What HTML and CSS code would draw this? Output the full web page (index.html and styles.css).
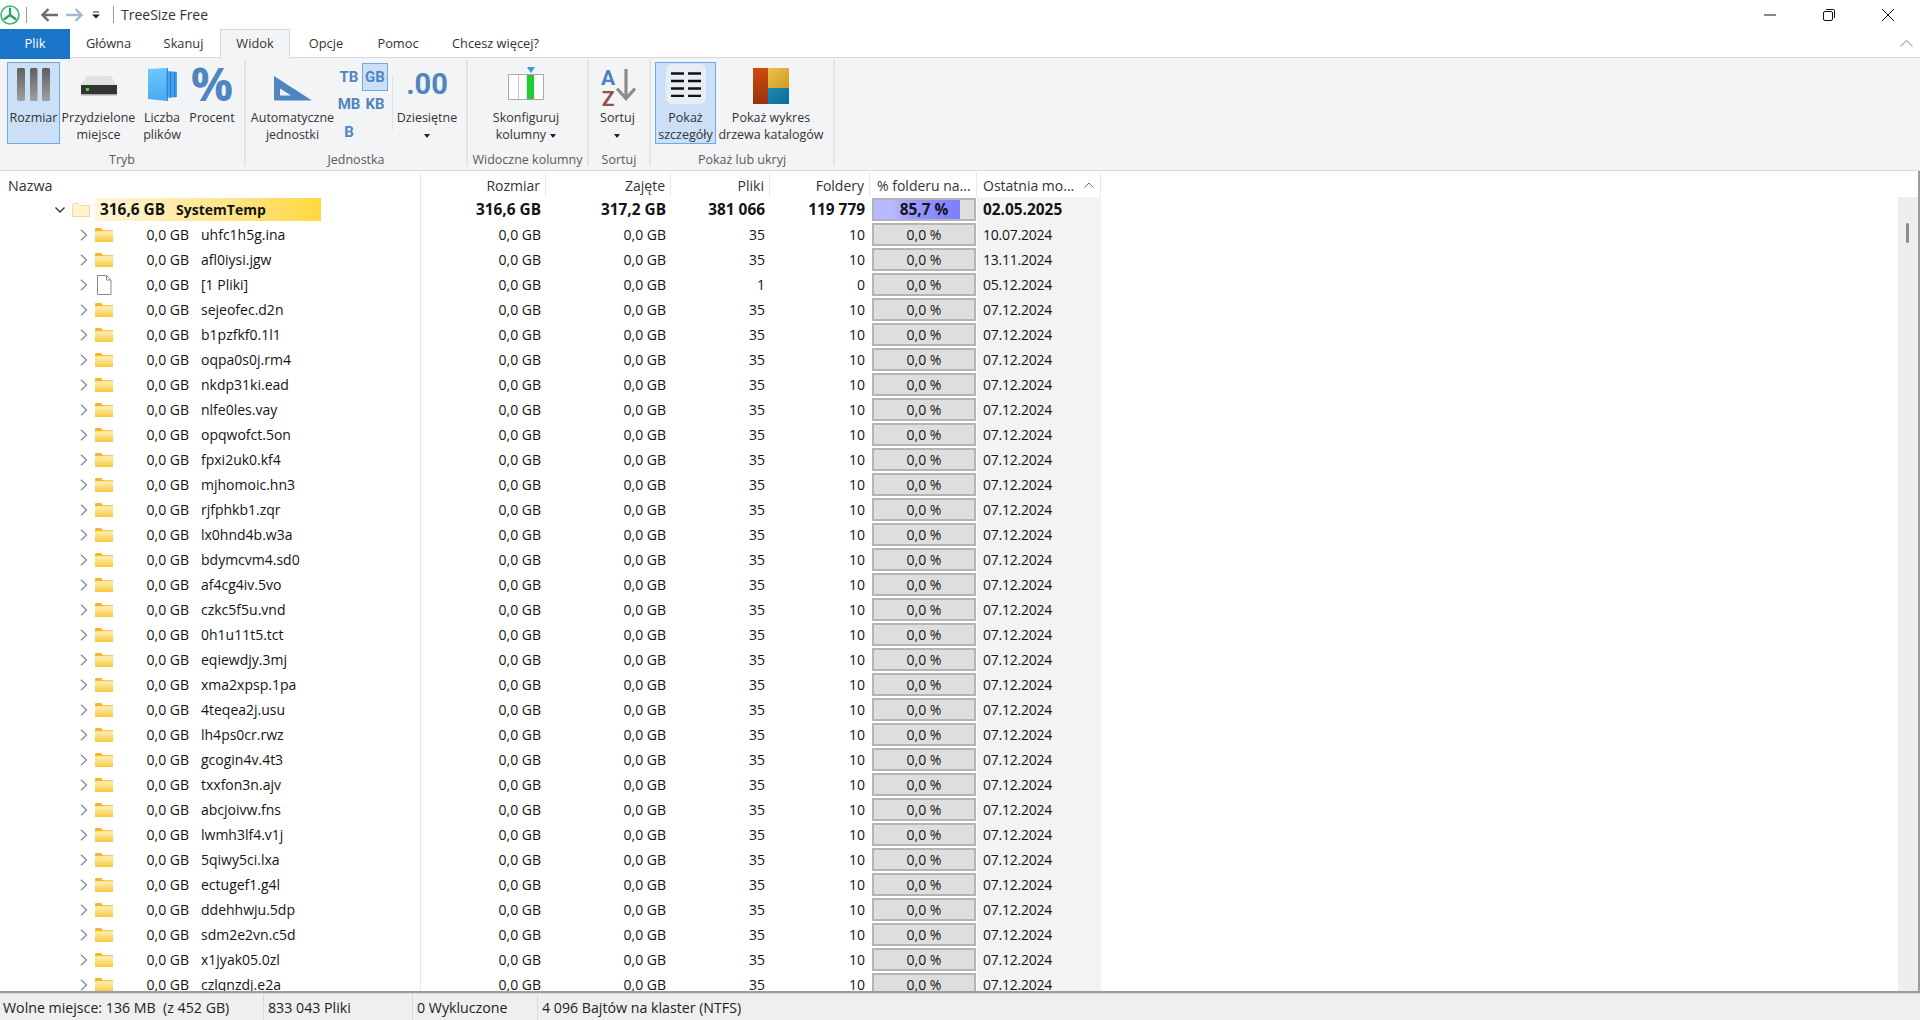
FILE: index.html
```html
<!DOCTYPE html>
<html lang="pl">
<head>
<meta charset="utf-8">
<title>TreeSize Free</title>
<link rel="stylesheet" href="styles.css">
</head>
<body>
<svg class="defs" width="0" height="0" aria-hidden="true">
  <defs>
    <linearGradient id="fgrad" x1="0" y1="0" x2="0" y2="1"><stop offset="0" stop-color="#fff0b8"/><stop offset="1" stop-color="#f8c840"/></linearGradient>
    <linearGradient id="barg" x1="0" y1="0" x2="0" y2="1"><stop offset="0" stop-color="#5f5f5f"/><stop offset="1" stop-color="#a0a0a0"/></linearGradient>
    <linearGradient id="pageg" x1="0" y1="0" x2="0" y2="1"><stop offset="0" stop-color="#6fc8fb"/><stop offset="1" stop-color="#4aaaf2"/></linearGradient>
    <linearGradient id="redg" x1="0" y1="0" x2="0" y2="1"><stop offset="0" stop-color="#cf4a0e"/><stop offset="1" stop-color="#97330f"/></linearGradient>
    <linearGradient id="yelg" x1="0" y1="0" x2="1" y2="1"><stop offset="0" stop-color="#ecc050"/><stop offset="1" stop-color="#d09c20"/></linearGradient>
    <linearGradient id="blug" x1="0" y1="0" x2="1" y2="1"><stop offset="0" stop-color="#2088b4"/><stop offset="1" stop-color="#0a6a96"/></linearGradient>
    <symbol id="folder" viewBox="0 0 18 14"><path d="M0 1.500C0 .6.500 0 1.300 0H6l2 2.200h10V4H0z" fill="#f5b52a"/><path d="M0 3.200h18V14H0z" fill="url(#fgrad)"/></symbol>
    <symbol id="chev" viewBox="0 0 12 12"><path d="M4 .7 9.500 6 4 11.300" fill="none" stroke="#8a8a8a" stroke-width="1.300"/></symbol>
  </defs>
</svg>
<div class="app">
  <header class="titlebar">
    <svg class="logo" viewBox="0 0 20 20"><circle cx="10" cy="10" r="9" fill="#f2fbf6" stroke="#3cb878" stroke-width="1.600"/><path d="M10 3.500V10M10 10l-5.500 4M10 10l5.500 4" stroke="#2f9e68" stroke-width="2.200" fill="none" stroke-linecap="round"/></svg>
    <span class="tsep"></span>
    <svg class="nav" viewBox="0 0 17 14"><path d="M7.500 1 1.500 7l6 6M1.500 7H17" fill="none" stroke="#6c6c6c" stroke-width="2.400"/></svg>
    <svg class="nav nav-fwd" viewBox="0 0 17 14"><path d="M9.500 1l6 6-6 6M15.500 7H0" fill="none" stroke="#a4b8d2" stroke-width="2.400"/></svg>
    <svg class="qa" viewBox="0 0 8 8"><path d="M1 1h6" stroke="#222" stroke-width="1"/><path d="M0 3.500h8L4 7.500z" fill="#222"/></svg>
    <span class="tsep tsep2"></span>
    <span class="apptitle">TreeSize Free</span>
    <div class="winctl">
      <svg viewBox="0 0 12 12"><path d="M0 6h12" stroke="#111" stroke-width="1"/></svg>
      <svg viewBox="0 0 12 12"><rect x=".5" y="2.500" width="9" height="9" rx="1.500" fill="none" stroke="#111"/><path d="M3 .5h7.500a1 1 0 0 1 1 1V9" fill="none" stroke="#111"/></svg>
      <svg viewBox="0 0 12 12"><path d="M0 0l12 12M12 0 0 12" stroke="#111" stroke-width="1"/></svg>
    </div>
  </header>

  <nav class="tabs">
    <span class="tab tab-file">Plik</span>
    <span class="tab">Główna</span>
    <span class="tab">Skanuj</span>
    <span class="tab tab-active">Widok</span>
    <span class="tab">Opcje</span>
    <span class="tab">Pomoc</span>
    <span class="tab">Chcesz więcej?</span>
    <svg class="collapse" viewBox="0 0 13 8"><path d="M.5 7.500l6-6 6 6" fill="none" stroke="#b0b0b0" stroke-width="1.200"/></svg>
  </nav>

  <section class="ribbon">
    <div class="group g-tryb">
      <div class="gbody">
        <div class="rbtn w-rozmiar on">
          <svg class="ico" width="34" height="33" viewBox="0 0 34 33"><rect x="0" y="0" width="8" height="33" rx="1.500" fill="url(#barg)"/><rect x="13" y="0" width="7.500" height="33" rx="1.500" fill="url(#barg)"/><rect x="25" y="0" width="8" height="33" rx="1.500" fill="url(#barg)"/></svg>
          <span class="lbl">Rozmiar</span>
        </div>
        <div class="rbtn w-przy">
          <svg class="ico" width="36" height="20" viewBox="0 0 36 20"><path d="M6 0h24l6 9H0z" fill="#e2e2e2"/><path d="M0 9h36v10H0z" fill="#333"/><path d="M0 18h36v1.500H0z" fill="#aaa"/><rect x="5" y="12" width="3" height="3" fill="#3fdc4a"/></svg>
          <span class="lbl">Przydzielone<br>miejsce</span>
        </div>
        <div class="rbtn w-licz">
          <svg class="ico" width="29" height="33" viewBox="0 0 29 33"><path d="M18 3l11 1v25l-11 1z" fill="#4aa4ee"/><path d="M22 3.500h1.300v26H22zM26 3.800h1.300v25.400H26z" fill="#1f7fd0"/><path d="M0 1 18.500 0v33L0 31z" fill="url(#pageg)"/><path d="M18.500 0H20v33h-1.500z" fill="#2b8ee0"/></svg>
          <span class="lbl">Liczba<br>plików</span>
        </div>
        <div class="rbtn w-licz">
          <span class="ico pct">%</span>
          <span class="lbl">Procent</span>
        </div>
      </div>
      <div class="glabel">Tryb</div>
    </div>

    <div class="group g-jedn">
      <div class="gbody">
        <div class="rbtn w-auto">
          <svg class="ico" width="38" height="25" viewBox="0 0 38 25"><path fill-rule="evenodd" d="M0 0 38 24.500H0zM6 12.500V19.500H17z" fill="#4f86c0"/></svg>
          <span class="lbl">Automatyczne<br>jednostki</span>
        </div>
        <div class="units">
          <span class="unit">TB</span><span class="unit unit-on">GB</span>
          <span class="unit">MB</span><span class="unit">KB</span>
          <span class="unit">B</span>
        </div>
        <span class="vsep"></span>
        <div class="rbtn w-dzies">
          <span class="ico dec">.00</span>
          <span class="lbl">Dziesiętne<br><i class="caret"></i></span>
        </div>
      </div>
      <div class="glabel">Jednostka</div>
    </div>

    <div class="group g-kol">
      <div class="gbody">
        <div class="rbtn w-full">
          <svg class="ico" width="36" height="34" viewBox="0 0 36 34"><path d="M19 0h8l-4 6z" fill="#3b97e0"/><path d="M.5 7.500h35v25H.5z" fill="#fff" stroke="#a8a8a8"/><path d="M10.500 8v24M19 8v24" stroke="#c8c8c8"/><rect x="19" y="8" width="7" height="24" fill="#22cc33"/></svg>
          <span class="lbl">Skonfiguruj<br>kolumny <i class="caret caret-inline"></i></span>
        </div>
      </div>
      <div class="glabel">Widoczne kolumny</div>
    </div>

    <div class="group g-sort">
      <div class="gbody">
        <div class="rbtn w-full">
          <div class="ico sorticon">
            <span class="az"><b class="az-a">A</b><b class="az-z">Z</b></span>
            <svg width="20" height="32" viewBox="0 0 20 32"><path d="M10 0v29M1 19.500 10 29.500l9-10" fill="none" stroke="#8c8c8c" stroke-width="3.200"/></svg>
          </div>
          <span class="lbl">Sortuj<br><i class="caret"></i></span>
        </div>
      </div>
      <div class="glabel">Sortuj</div>
    </div>

    <div class="group g-pokaz">
      <div class="gbody">
        <div class="rbtn w-szcz on">
          <span class="ico detail">
            <svg width="30" height="25" viewBox="0 0 30 25"><path d="M0 1.500h13M17 1.500h13M0 9h13M17 9h13M0 16.500h13M17 16.500h13M0 24h13M17 24h13" stroke="#111" stroke-width="2.400"/></svg>
          </span>
          <span class="lbl">Pokaż<br>szczegóły</span>
        </div>
        <div class="rbtn w-wyk">
          <svg class="ico" width="36" height="36" viewBox="0 0 36 36"><rect x="0" y="0" width="15" height="36" fill="url(#redg)"/><rect x="15" y="0" width="21" height="20" fill="url(#yelg)"/><rect x="15" y="20" width="21" height="16" fill="url(#blug)"/></svg>
          <span class="lbl">Pokaż wykres<br>drzewa katalogów</span>
        </div>
      </div>
      <div class="glabel">Pokaż lub ukryj</div>
    </div>
  </section>

  <main class="table">
    <div class="thead">
      <span class="th th-name">Nazwa</span>
      <span class="th">Rozmiar</span>
      <span class="th">Zajęte</span>
      <span class="th">Pliki</span>
      <span class="th">Foldery</span>
      <span class="th th-pct">% folderu na...</span>
      <span class="th th-date">Ostatnia mo...<svg class="sortup" viewBox="0 0 10 6"><path d="M.5 5.500 5 1l4.500 4.500" fill="none" stroke="#777"/></svg></span>
    </div>
    <div class="tbody">
      <div class="rows">
        <div class="row root">
          <div class="c-name"><svg class="chev" viewBox="0 0 12 12"><path d="M1.500 3.500 6 8l4.500-4.500" fill="none" stroke="#333" stroke-width="1.300"/></svg><svg class="fold" viewBox="0 0 18 14"><path d="M.5 1.500C.5.800 1 .5 1.500.5H6l2 2h9.500v11H.5z" fill="#fff3d0" stroke="#f0dca0"/></svg><div class="rootbar"><span class="sz">316,6 GB</span><span class="nm">SystemTemp</span></div></div>
          <span class="num">316,6 GB</span><span class="num">317,2 GB</span><span class="num">381 066</span><span class="num">119 779</span>
          <div class="c-pct"><div class="pbar"><i class="pfill" style="width:85.7%"></i><span class="ptext">85,7 %</span></div></div>
          <span class="c-date">02.05.2025</span>
        </div>
        <div class="row"><div class="c-name"><svg class="chev"><use href="#chev"/></svg><svg class="fold"><use href="#folder"/></svg><span class="sz">0,0 GB</span><span class="nm">uhfc1h5g.ina</span></div><span class="num">0,0 GB</span><span class="num">0,0 GB</span><span class="num">35</span><span class="num">10</span><div class="c-pct"><div class="pbar"><span class="ptext">0,0 %</span></div></div><span class="c-date">10.07.2024</span></div>
        <div class="row"><div class="c-name"><svg class="chev"><use href="#chev"/></svg><svg class="fold"><use href="#folder"/></svg><span class="sz">0,0 GB</span><span class="nm">afl0iysi.jgw</span></div><span class="num">0,0 GB</span><span class="num">0,0 GB</span><span class="num">35</span><span class="num">10</span><div class="c-pct"><div class="pbar"><span class="ptext">0,0 %</span></div></div><span class="c-date">13.11.2024</span></div>
        <div class="row"><div class="c-name"><svg class="chev"><use href="#chev"/></svg><svg class="fold fold-file" viewBox="0 0 18 20"><path d="M2.500.5h9l4.500 4.500v14.500H2.500zM11.500.5V5H16" fill="#fff" stroke="#8a8a8a"/></svg><span class="sz">0,0 GB</span><span class="nm">[1 Pliki]</span></div><span class="num">0,0 GB</span><span class="num">0,0 GB</span><span class="num">1</span><span class="num">0</span><div class="c-pct"><div class="pbar"><span class="ptext">0,0 %</span></div></div><span class="c-date">05.12.2024</span></div>
        <div class="row"><div class="c-name"><svg class="chev"><use href="#chev"/></svg><svg class="fold"><use href="#folder"/></svg><span class="sz">0,0 GB</span><span class="nm">sejeofec.d2n</span></div><span class="num">0,0 GB</span><span class="num">0,0 GB</span><span class="num">35</span><span class="num">10</span><div class="c-pct"><div class="pbar"><span class="ptext">0,0 %</span></div></div><span class="c-date">07.12.2024</span></div>
        <div class="row"><div class="c-name"><svg class="chev"><use href="#chev"/></svg><svg class="fold"><use href="#folder"/></svg><span class="sz">0,0 GB</span><span class="nm">b1pzfkf0.1l1</span></div><span class="num">0,0 GB</span><span class="num">0,0 GB</span><span class="num">35</span><span class="num">10</span><div class="c-pct"><div class="pbar"><span class="ptext">0,0 %</span></div></div><span class="c-date">07.12.2024</span></div>
        <div class="row"><div class="c-name"><svg class="chev"><use href="#chev"/></svg><svg class="fold"><use href="#folder"/></svg><span class="sz">0,0 GB</span><span class="nm">oqpa0s0j.rm4</span></div><span class="num">0,0 GB</span><span class="num">0,0 GB</span><span class="num">35</span><span class="num">10</span><div class="c-pct"><div class="pbar"><span class="ptext">0,0 %</span></div></div><span class="c-date">07.12.2024</span></div>
        <div class="row"><div class="c-name"><svg class="chev"><use href="#chev"/></svg><svg class="fold"><use href="#folder"/></svg><span class="sz">0,0 GB</span><span class="nm">nkdp31ki.ead</span></div><span class="num">0,0 GB</span><span class="num">0,0 GB</span><span class="num">35</span><span class="num">10</span><div class="c-pct"><div class="pbar"><span class="ptext">0,0 %</span></div></div><span class="c-date">07.12.2024</span></div>
        <div class="row"><div class="c-name"><svg class="chev"><use href="#chev"/></svg><svg class="fold"><use href="#folder"/></svg><span class="sz">0,0 GB</span><span class="nm">nlfe0les.vay</span></div><span class="num">0,0 GB</span><span class="num">0,0 GB</span><span class="num">35</span><span class="num">10</span><div class="c-pct"><div class="pbar"><span class="ptext">0,0 %</span></div></div><span class="c-date">07.12.2024</span></div>
        <div class="row"><div class="c-name"><svg class="chev"><use href="#chev"/></svg><svg class="fold"><use href="#folder"/></svg><span class="sz">0,0 GB</span><span class="nm">opqwofct.5on</span></div><span class="num">0,0 GB</span><span class="num">0,0 GB</span><span class="num">35</span><span class="num">10</span><div class="c-pct"><div class="pbar"><span class="ptext">0,0 %</span></div></div><span class="c-date">07.12.2024</span></div>
        <div class="row"><div class="c-name"><svg class="chev"><use href="#chev"/></svg><svg class="fold"><use href="#folder"/></svg><span class="sz">0,0 GB</span><span class="nm">fpxi2uk0.kf4</span></div><span class="num">0,0 GB</span><span class="num">0,0 GB</span><span class="num">35</span><span class="num">10</span><div class="c-pct"><div class="pbar"><span class="ptext">0,0 %</span></div></div><span class="c-date">07.12.2024</span></div>
        <div class="row"><div class="c-name"><svg class="chev"><use href="#chev"/></svg><svg class="fold"><use href="#folder"/></svg><span class="sz">0,0 GB</span><span class="nm">mjhomoic.hn3</span></div><span class="num">0,0 GB</span><span class="num">0,0 GB</span><span class="num">35</span><span class="num">10</span><div class="c-pct"><div class="pbar"><span class="ptext">0,0 %</span></div></div><span class="c-date">07.12.2024</span></div>
        <div class="row"><div class="c-name"><svg class="chev"><use href="#chev"/></svg><svg class="fold"><use href="#folder"/></svg><span class="sz">0,0 GB</span><span class="nm">rjfphkb1.zqr</span></div><span class="num">0,0 GB</span><span class="num">0,0 GB</span><span class="num">35</span><span class="num">10</span><div class="c-pct"><div class="pbar"><span class="ptext">0,0 %</span></div></div><span class="c-date">07.12.2024</span></div>
        <div class="row"><div class="c-name"><svg class="chev"><use href="#chev"/></svg><svg class="fold"><use href="#folder"/></svg><span class="sz">0,0 GB</span><span class="nm">lx0hnd4b.w3a</span></div><span class="num">0,0 GB</span><span class="num">0,0 GB</span><span class="num">35</span><span class="num">10</span><div class="c-pct"><div class="pbar"><span class="ptext">0,0 %</span></div></div><span class="c-date">07.12.2024</span></div>
        <div class="row"><div class="c-name"><svg class="chev"><use href="#chev"/></svg><svg class="fold"><use href="#folder"/></svg><span class="sz">0,0 GB</span><span class="nm">bdymcvm4.sd0</span></div><span class="num">0,0 GB</span><span class="num">0,0 GB</span><span class="num">35</span><span class="num">10</span><div class="c-pct"><div class="pbar"><span class="ptext">0,0 %</span></div></div><span class="c-date">07.12.2024</span></div>
        <div class="row"><div class="c-name"><svg class="chev"><use href="#chev"/></svg><svg class="fold"><use href="#folder"/></svg><span class="sz">0,0 GB</span><span class="nm">af4cg4iv.5vo</span></div><span class="num">0,0 GB</span><span class="num">0,0 GB</span><span class="num">35</span><span class="num">10</span><div class="c-pct"><div class="pbar"><span class="ptext">0,0 %</span></div></div><span class="c-date">07.12.2024</span></div>
        <div class="row"><div class="c-name"><svg class="chev"><use href="#chev"/></svg><svg class="fold"><use href="#folder"/></svg><span class="sz">0,0 GB</span><span class="nm">czkc5f5u.vnd</span></div><span class="num">0,0 GB</span><span class="num">0,0 GB</span><span class="num">35</span><span class="num">10</span><div class="c-pct"><div class="pbar"><span class="ptext">0,0 %</span></div></div><span class="c-date">07.12.2024</span></div>
        <div class="row"><div class="c-name"><svg class="chev"><use href="#chev"/></svg><svg class="fold"><use href="#folder"/></svg><span class="sz">0,0 GB</span><span class="nm">0h1u11t5.tct</span></div><span class="num">0,0 GB</span><span class="num">0,0 GB</span><span class="num">35</span><span class="num">10</span><div class="c-pct"><div class="pbar"><span class="ptext">0,0 %</span></div></div><span class="c-date">07.12.2024</span></div>
        <div class="row"><div class="c-name"><svg class="chev"><use href="#chev"/></svg><svg class="fold"><use href="#folder"/></svg><span class="sz">0,0 GB</span><span class="nm">eqiewdjy.3mj</span></div><span class="num">0,0 GB</span><span class="num">0,0 GB</span><span class="num">35</span><span class="num">10</span><div class="c-pct"><div class="pbar"><span class="ptext">0,0 %</span></div></div><span class="c-date">07.12.2024</span></div>
        <div class="row"><div class="c-name"><svg class="chev"><use href="#chev"/></svg><svg class="fold"><use href="#folder"/></svg><span class="sz">0,0 GB</span><span class="nm">xma2xpsp.1pa</span></div><span class="num">0,0 GB</span><span class="num">0,0 GB</span><span class="num">35</span><span class="num">10</span><div class="c-pct"><div class="pbar"><span class="ptext">0,0 %</span></div></div><span class="c-date">07.12.2024</span></div>
        <div class="row"><div class="c-name"><svg class="chev"><use href="#chev"/></svg><svg class="fold"><use href="#folder"/></svg><span class="sz">0,0 GB</span><span class="nm">4teqea2j.usu</span></div><span class="num">0,0 GB</span><span class="num">0,0 GB</span><span class="num">35</span><span class="num">10</span><div class="c-pct"><div class="pbar"><span class="ptext">0,0 %</span></div></div><span class="c-date">07.12.2024</span></div>
        <div class="row"><div class="c-name"><svg class="chev"><use href="#chev"/></svg><svg class="fold"><use href="#folder"/></svg><span class="sz">0,0 GB</span><span class="nm">lh4ps0cr.rwz</span></div><span class="num">0,0 GB</span><span class="num">0,0 GB</span><span class="num">35</span><span class="num">10</span><div class="c-pct"><div class="pbar"><span class="ptext">0,0 %</span></div></div><span class="c-date">07.12.2024</span></div>
        <div class="row"><div class="c-name"><svg class="chev"><use href="#chev"/></svg><svg class="fold"><use href="#folder"/></svg><span class="sz">0,0 GB</span><span class="nm">gcogin4v.4t3</span></div><span class="num">0,0 GB</span><span class="num">0,0 GB</span><span class="num">35</span><span class="num">10</span><div class="c-pct"><div class="pbar"><span class="ptext">0,0 %</span></div></div><span class="c-date">07.12.2024</span></div>
        <div class="row"><div class="c-name"><svg class="chev"><use href="#chev"/></svg><svg class="fold"><use href="#folder"/></svg><span class="sz">0,0 GB</span><span class="nm">txxfon3n.ajv</span></div><span class="num">0,0 GB</span><span class="num">0,0 GB</span><span class="num">35</span><span class="num">10</span><div class="c-pct"><div class="pbar"><span class="ptext">0,0 %</span></div></div><span class="c-date">07.12.2024</span></div>
        <div class="row"><div class="c-name"><svg class="chev"><use href="#chev"/></svg><svg class="fold"><use href="#folder"/></svg><span class="sz">0,0 GB</span><span class="nm">abcjoivw.fns</span></div><span class="num">0,0 GB</span><span class="num">0,0 GB</span><span class="num">35</span><span class="num">10</span><div class="c-pct"><div class="pbar"><span class="ptext">0,0 %</span></div></div><span class="c-date">07.12.2024</span></div>
        <div class="row"><div class="c-name"><svg class="chev"><use href="#chev"/></svg><svg class="fold"><use href="#folder"/></svg><span class="sz">0,0 GB</span><span class="nm">lwmh3lf4.v1j</span></div><span class="num">0,0 GB</span><span class="num">0,0 GB</span><span class="num">35</span><span class="num">10</span><div class="c-pct"><div class="pbar"><span class="ptext">0,0 %</span></div></div><span class="c-date">07.12.2024</span></div>
        <div class="row"><div class="c-name"><svg class="chev"><use href="#chev"/></svg><svg class="fold"><use href="#folder"/></svg><span class="sz">0,0 GB</span><span class="nm">5qiwy5ci.lxa</span></div><span class="num">0,0 GB</span><span class="num">0,0 GB</span><span class="num">35</span><span class="num">10</span><div class="c-pct"><div class="pbar"><span class="ptext">0,0 %</span></div></div><span class="c-date">07.12.2024</span></div>
        <div class="row"><div class="c-name"><svg class="chev"><use href="#chev"/></svg><svg class="fold"><use href="#folder"/></svg><span class="sz">0,0 GB</span><span class="nm">ectugef1.g4l</span></div><span class="num">0,0 GB</span><span class="num">0,0 GB</span><span class="num">35</span><span class="num">10</span><div class="c-pct"><div class="pbar"><span class="ptext">0,0 %</span></div></div><span class="c-date">07.12.2024</span></div>
        <div class="row"><div class="c-name"><svg class="chev"><use href="#chev"/></svg><svg class="fold"><use href="#folder"/></svg><span class="sz">0,0 GB</span><span class="nm">ddehhwju.5dp</span></div><span class="num">0,0 GB</span><span class="num">0,0 GB</span><span class="num">35</span><span class="num">10</span><div class="c-pct"><div class="pbar"><span class="ptext">0,0 %</span></div></div><span class="c-date">07.12.2024</span></div>
        <div class="row"><div class="c-name"><svg class="chev"><use href="#chev"/></svg><svg class="fold"><use href="#folder"/></svg><span class="sz">0,0 GB</span><span class="nm">sdm2e2vn.c5d</span></div><span class="num">0,0 GB</span><span class="num">0,0 GB</span><span class="num">35</span><span class="num">10</span><div class="c-pct"><div class="pbar"><span class="ptext">0,0 %</span></div></div><span class="c-date">07.12.2024</span></div>
        <div class="row"><div class="c-name"><svg class="chev"><use href="#chev"/></svg><svg class="fold"><use href="#folder"/></svg><span class="sz">0,0 GB</span><span class="nm">x1jyak05.0zl</span></div><span class="num">0,0 GB</span><span class="num">0,0 GB</span><span class="num">35</span><span class="num">10</span><div class="c-pct"><div class="pbar"><span class="ptext">0,0 %</span></div></div><span class="c-date">07.12.2024</span></div>
        <div class="row"><div class="c-name"><svg class="chev"><use href="#chev"/></svg><svg class="fold"><use href="#folder"/></svg><span class="sz">0,0 GB</span><span class="nm">czlqnzdj.e2a</span></div><span class="num">0,0 GB</span><span class="num">0,0 GB</span><span class="num">35</span><span class="num">10</span><div class="c-pct"><div class="pbar"><span class="ptext">0,0 %</span></div></div><span class="c-date">07.12.2024</span></div>
      </div>
      <div class="scroll"><i class="thumb"></i></div>
    </div>
  </main>

  <footer class="status">
    <span class="st st1">Wolne miejsce: 136 MB&nbsp; (z 452 GB)</span>
    <span class="st st2">833 043 Pliki</span>
    <span class="st st3">0 Wykluczone</span>
    <span class="st st4">4 096 Bajtów na klaster (NTFS)</span>
  </footer>
</div>
</body>
</html>
```

FILE: styles.css
```css
* { box-sizing: border-box; }
html, body { margin: 0; height: 100%; }
body {
  font-family: "Open Sans", "Noto Sans", sans-serif;
  font-size: 14px;
  color: #141414;
  background: #fff;
  overflow: hidden;
}
.defs { display: block; height: 0; }
.app { width: 1920px; height: 1020px; display: flex; flex-direction: column; }

/* title bar */
.titlebar { height: 29px; display: flex; align-items: center; flex: none; }
.logo { width: 20px; height: 20px; flex: none; }
.tsep { width: 1px; height: 16px; background: #9a9a9a; margin-left: 6px; flex: none; }
.nav { width: 17px; height: 14px; margin-left: 14px; flex: none; }
.nav-fwd { margin-left: 8px; }
.qa { width: 8px; height: 8px; margin-left: 9px; flex: none; }
.tsep2 { margin-left: 13px; height: 17px; }
.apptitle { margin-left: 7px; font-size: 14px; color: #333; }
.winctl { margin-left: auto; display: flex; align-items: center; padding-right: 26px; gap: 47px; }
.winctl svg { width: 12px; height: 12px; display: block; }

/* tabs */
.tabs { height: 28px; flex: none; display: grid; grid-template-columns: 70px 77px 73px 70px 72px 72px 123px 1fr; position: relative; }
.tab { display: flex; align-items: center; justify-content: center; font-size: 12.800px; color: #333; padding-bottom: 2px; }
.tab-file { background: #1a75c9; color: #fff; }
.tab-active { background: #f3f4f6; border: 1px solid #d9d9d9; border-bottom: 0; height: 30px; position: relative; z-index: 1; padding-bottom: 4px; }
.collapse { width: 13px; height: 8px; position: absolute; right: 7px; top: 10px; }

/* ribbon */
.ribbon { height: 114px; flex: none; display: flex; background: #f3f4f6; border-top: 1px solid #d9d9d9; border-bottom: 1px solid #d9d9d9; padding-top: 2px; }
.group { height: 106px; border-right: 2px solid #e4e5e7; flex: none; display: flex; flex-direction: column; }
.gbody { display: flex; height: 82px; margin-top: 2px; align-items: flex-start; }
.glabel { margin-top: 10px; line-height: 12px; text-align: center; font-size: 12.5px; color: #5a5a5a; white-space: nowrap; }
.g-tryb { width: 246px; padding-left: 7px; }
.g-tryb .glabel { margin-left: -7px; }
.g-jedn { width: 222px; }
.g-kol { width: 121px; }
.g-sort { width: 62px; }
.g-pokaz { width: 184px; padding-left: 4px; }
.g-pokaz .glabel { margin-left: -4px; }

.rbtn { height: 82px; display: flex; flex-direction: column; align-items: center; flex: none; border: 1px solid transparent; padding-top: 2px; }
.rbtn.on { background: #cbe0f6; border-color: #6ea8e6; }
.ico { height: 44px; flex: none; display: block; }
svg.ico { height: auto; }
.lbl { font-size: 12.5px; line-height: 17px; text-align: center; color: #333; white-space: nowrap; }
.w-rozmiar { width: 53px; }
.w-rozmiar svg.ico { margin: 3px 0 8px; }
.w-przy { width: 77px; }
.w-przy svg.ico { margin: 11px 0 13px; }
.w-licz { width: 50px; }
.w-licz svg.ico { margin: 3px 0 8px; }
.pct { font: 700 47px/36px "Open Sans", sans-serif; color: #4f86c0; }
.w-auto { width: 92px; padding-left: 1px; }
.w-auto svg.ico { margin: 11px 0 8px; }
.units { width: 56px; margin-left: -2px; display: grid; grid-template-columns: 26px 26px; grid-auto-rows: 27.5px; margin-top: 1px; }
.unit { display: flex; align-items: center; justify-content: center; font: 700 15px "Roboto", sans-serif; color: #4f86c0; border: 1px solid transparent; }
.unit-on { background: #cbe0f6; border-color: #6ea8e6; }
.vsep { width: 1px; height: 55px; background: #e0e1e3; margin-top: 13px; flex: none; }
.w-dzies { width: 68px; }
.dec { font: 700 29px/38px "Roboto", sans-serif; color: #4f86c0; }
.w-full { flex: 1; padding-right: 3px; }
.w-full svg.ico { margin: 2px 0 8px; }
.caret { display: inline-block; width: 0; height: 0; border: 3.5px solid transparent; border-top: 4px solid #222; border-bottom: 0; vertical-align: middle; }
.caret-inline { margin-left: 1px; }
.sorticon { display: flex; align-items: flex-start; padding-top: 3px; height: 44px; }
.sorticon svg { margin-top: 1px; margin-left: -1px; }
.az { display: flex; flex-direction: column; align-items: center; width: 17px; }
.az b { font: 700 21px/20px "Roboto", sans-serif; display: block; }
.az-a { color: #4f80bf; }
.az-z { color: #8f5450; margin-top: 1px; }
.w-szcz { width: 61px; padding-top: 1px; }
.detail { width: 40px; height: 40px; background: #e6edf5; border-radius: 6px; display: flex; align-items: center; justify-content: center; margin-bottom: 5px; }
.w-wyk { width: 110px; }
.w-wyk svg.ico { margin: 3px 0 5px; }

/* table */
.table { flex: 1; min-height: 0; display: flex; flex-direction: column; border-right: 2px solid #9c9c9c; border-bottom: 2px solid #9c9c9c; overflow: hidden; }
.thead, .row { display: grid; grid-template-columns: 421px 125px 125px 99px 100px 107px 124px; }
.thead { height: 26px; flex: none; }
.th { display: flex; align-items: center; justify-content: flex-end; padding-right: 5px; font-size: 14px; border-right: 1px solid #e8e8e8; margin-top: 2px; color: #333; white-space: nowrap; }
.th-name { justify-content: flex-start; padding-left: 8px; font-size: 14.300px; }
.th-pct { justify-content: flex-start; padding-left: 7px; padding-right: 0; }
.th-date { justify-content: flex-start; padding-left: 6px; padding-right: 0; }
.sortup { width: 10px; height: 6px; margin-left: 10px; flex: none; }
.tbody { flex: 1; min-height: 0; display: flex; overflow: hidden; }
.rows { width: 1898px; flex: none; }
.row { height: 25px; align-items: stretch; }
.c-name { display: flex; align-items: center; padding-left: 77px; border-right: 1px solid #e8e8e8; white-space: nowrap; min-width: 0; }
.chev { width: 12px; height: 12px; margin-right: 6px; flex: none; }
.fold { width: 18px; height: 14px; flex: none; }
.fold-file { height: 20px; }
.sz { width: 76px; text-align: right; flex: none; }
.nm { margin-left: 12px; }
.num { display: flex; align-items: center; justify-content: flex-end; padding-right: 5px; }
.c-pct { padding: 1px 1px 1px 2px; }
.pbar { height: 23px; background: #dedede; border: 2px solid #b4b4b4; position: relative; display: flex; align-items: center; justify-content: center; }
.pfill { position: absolute; left: 0; top: 0; bottom: 0; background: linear-gradient(90deg, #b9b9ff 0%, #b9b9ff 20%, #9a9aff 45%, #7c7cff 100%); }
.ptext { position: relative; }
.c-date { display: flex; align-items: center; padding-left: 6px; background: #f3f3f3; letter-spacing: -.25px; }
.root { font-weight: 700; }
.root .num, .root .c-date, .root .ptext, .root .sz { font-size: 15.400px; letter-spacing: 0; }
.root .c-name { padding-left: 54px; }
.root .fold { margin-right: 5px; }
.rootbar { width: 226px; height: 23px; display: flex; align-items: center; padding-left: 5px; background: linear-gradient(90deg, #fff6dc 0%, #ffe489 60%, #ffd83e 100%); }
.rootbar .sz { width: auto; }
.rootbar .nm { margin-left: 11px; }
.scroll { width: 20px; flex: none; background: #eee; position: relative; }
.thumb { position: absolute; left: 8px; top: 26px; width: 3px; height: 20px; background: #8a8a8a; border-radius: 2px; }

/* status */
.status { display: flex; align-items: center; background: #efefef; height: 27px; flex: none; border-top: 1px solid #dcdcdc; font-size: 14.200px; color: #222; }
.st { height: 100%; display: flex; align-items: center; padding-left: 4px; border-right: 1px solid #dcdcdc; white-space: nowrap; }
.st1 { width: 264px; padding-left: 3px; }
.st2 { width: 149px; }
.st3 { width: 125px; }
.st4 { border-right: 0; }
```
